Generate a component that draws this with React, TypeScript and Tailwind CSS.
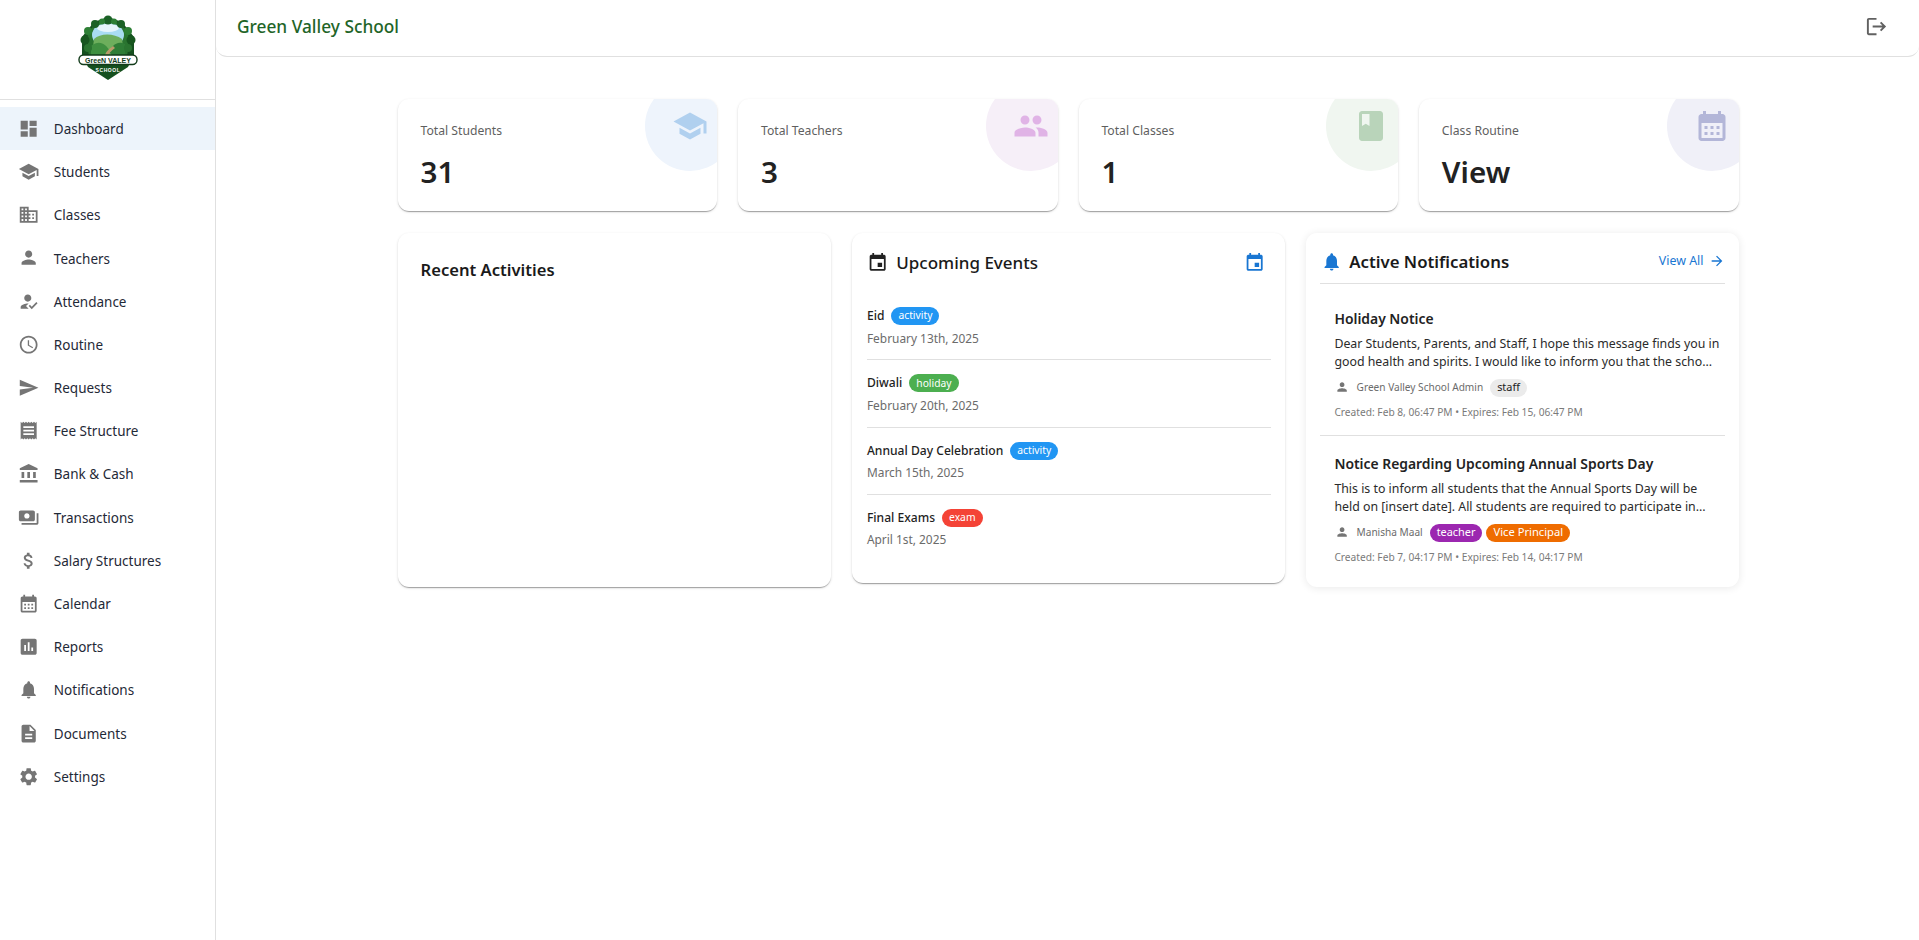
import React from "react";

const P: Record<string, string> = {
  dashboard: "M3 13h8V3H3zm0 8h8v-6H3zm10 0h8V11h-8zm0-18v6h8V3z",
  school: "M5 13.18v4L12 21l7-3.82v-4L12 17zM12 3 1 9l11 6 9-4.91V17h2V9z",
  domain: "M12 7V3H2v18h20V7H12zM6 19H4v-2h2v2zm0-4H4v-2h2v2zm0-4H4V9h2v2zm0-4H4V5h2v2zm4 12H8v-2h2v2zm0-4H8v-2h2v2zm0-4H8V9h2v2zm0-4H8V5h2v2zm10 12h-8v-2h2v-2h-2v-2h2v-2h-2V9h8v10zm-2-8h-2v2h2v-2zm0 4h-2v2h2v-2z",
  person: "M12 12c2.21 0 4-1.79 4-4s-1.79-4-4-4-4 1.79-4 4 1.79 4 4 4m0 2c-2.67 0-8 1.34-8 4v2h16v-2c0-2.66-5.33-4-8-4",
  reg: "M9 17l3-2.94c-.39-.04-.68-.06-1-.06-2.67 0-8 1.34-8 4v2h9l-3-3zm2-5c2.21 0 4-1.79 4-4s-1.79-4-4-4-4 1.79-4 4 1.79 4 4 4m4.47 8.5L12 17l1.4-1.41 2.07 2.08 5.13-5.17 1.4 1.41z",
  time: "M11.99 2C6.47 2 2 6.48 2 12s4.47 10 9.99 10C17.52 22 22 17.52 22 12S17.52 2 11.99 2zM12 20c-4.42 0-8-3.58-8-8s3.58-8 8-8 8 3.58 8 8-3.58 8-8 8zm.5-13H11v6l5.25 3.15.75-1.23-4.5-2.67z",
  send: "M2.01 21 23 12 2.01 3 2 10l15 2-15 2z",
  receipt: "M18 17H6v-2h12v2zm0-4H6v-2h12v2zm0-4H6V7h12v2zM3 22l1.5-1.5L6 22l1.5-1.5L9 22l1.5-1.5L12 22l1.5-1.5L15 22l1.5-1.5L18 22l1.5-1.5L21 22V2l-1.5 1.5L18 2l-1.5 1.5L15 2l-1.5 1.5L12 2l-1.5 1.5L9 2 7.5 3.5 6 2 4.5 3.5 3 2v20z",
  bank: "M4 10h3v7H4zm6.5 0h3v7h-3zM2 19h20v3H2zm15-9h3v7h-3zm-5-9L2 6v2h20V6z",
  payments: "M19 14V6c0-1.1-.9-2-2-2H3c-1.1 0-2 .9-2 2v8c0 1.1.9 2 2 2h14c1.1 0 2-.9 2-2zm-9-1c-1.66 0-3-1.34-3-3s1.34-3 3-3 3 1.34 3 3-1.34 3-3 3zm13-6v11c0 1.1-.9 2-2 2H4v-2h17V7h2z",
  money: "M11.8 10.9c-2.27-.59-3-1.2-3-2.15 0-1.09 1.01-1.85 2.7-1.85 1.78 0 2.44.85 2.5 2.1h2.21c-.07-1.72-1.12-3.3-3.21-3.81V3h-3v2.16c-1.94.42-3.5 1.68-3.5 3.61 0 2.31 1.91 3.46 4.7 4.13 2.5.6 3 1.48 3 2.41 0 .69-.49 1.79-2.7 1.79-2.06 0-2.87-.92-2.98-2.1h-2.2c.12 2.19 1.76 3.42 3.68 3.83V21h3v-2.15c1.95-.37 3.5-1.5 3.5-3.55 0-2.84-2.43-3.81-4.7-4.4z",
  calendar: "M19 4h-1V2h-2v2H8V2H6v2H5c-1.11 0-1.99.9-1.99 2L3 20c0 1.1.89 2 2 2h14c1.1 0 2-.9 2-2V6c0-1.1-.9-2-2-2zm0 16H5V10h14v10zM9 14H7v-2h2v2zm4 0h-2v-2h2v2zm4 0h-2v-2h2v2zm-8 4H7v-2h2v2zm4 0h-2v-2h2v2zm4 0h-2v-2h2v2z",
  assess: "M19 3H5c-1.1 0-2 .9-2 2v14c0 1.1.9 2 2 2h14c1.1 0 2-.9 2-2V5c0-1.1-.9-2-2-2zM9 17H7v-7h2v7zm4 0h-2V7h2v10zm4 0h-2v-4h2v4z",
  bell: "M12 22c1.1 0 2-.9 2-2h-4c0 1.1.89 2 2 2zm6-6v-5c0-3.07-1.64-5.64-4.5-6.32V4c0-.83-.67-1.5-1.5-1.5s-1.5.67-1.5 1.5v.68C7.63 5.36 6 7.92 6 11v5l-2 2v1h16v-1l-2-2z",
  doc: "M14 2H6c-1.1 0-1.99.9-1.99 2L4 20c0 1.1.89 2 2 2h12c1.1 0 2-.9 2-2V8l-6-6zm2 16H8v-2h8v2zm0-4H8v-2h8v2zm-3-5V3.5L18.5 9H13z",
  settings: "M19.14 12.94c.04-.3.06-.61.06-.94 0-.32-.02-.64-.07-.94l2.03-1.58c.18-.14.23-.41.12-.61l-1.92-3.32c-.12-.22-.37-.29-.59-.22l-2.39.96c-.5-.38-1.03-.7-1.62-.94l-.36-2.54c-.04-.24-.24-.41-.48-.41h-3.84c-.24 0-.43.17-.47.41l-.36 2.54c-.59.24-1.13.57-1.62.94l-2.39-.96c-.22-.08-.47 0-.59.22L2.74 8.87c-.12.21-.08.47.12.61l2.03 1.58c-.05.3-.09.63-.09.94s.02.64.07.94l-2.03 1.58c-.18.14-.23.41-.12.61l1.92 3.32c.12.22.37.29.59.22l2.39-.96c.5.38 1.03.7 1.62.94l.36 2.54c.05.24.24.41.48.41h3.84c.24 0 .44-.17.47-.41l.36-2.54c.59-.24 1.13-.56 1.62-.94l2.39.96c.22.08.47 0 .59-.22l1.92-3.32c.12-.22.07-.47-.12-.61l-2.01-1.58zM12 15.6c-1.98 0-3.6-1.62-3.6-3.6s1.62-3.6 3.6-3.6 3.6 1.62 3.6 3.6-1.62 3.6-3.6 3.6z",
  people: "M16 11c1.66 0 2.99-1.34 2.99-3S17.66 5 16 5s-3 1.34-3 3 1.34 3 3 3zm-8 0c1.66 0 2.99-1.34 2.99-3S9.66 5 8 5 5 6.34 5 8s1.34 3 3 3zm0 2c-2.33 0-7 1.17-7 3.5V19h14v-2.5c0-2.33-4.67-3.5-7-3.5zm8 0c-.29 0-.62.02-.97.05 1.16.84 1.97 1.97 1.97 3.45V19h6v-2.5c0-2.33-4.67-3.5-7-3.5z",
  book: "M18 2H6c-1.1 0-2 .9-2 2v16c0 1.1.9 2 2 2h12c1.1 0 2-.9 2-2V4c0-1.1-.9-2-2-2zM6 4h5v8l-2.5-1.5L6 12V4z",
  event: "M17 12h-5v5h5v-5zM16 1v2H8V1H6v2H5c-1.11 0-1.99.9-1.99 2L3 19c0 1.1.89 2 2 2h14c1.1 0 2-.9 2-2V5c0-1.1-.9-2-2-2h-1V1h-2zm3 18H5V8h14v11z",
  arrow: "M12 4l-1.41 1.41L16.17 11H4v2h12.17l-5.58 5.59L12 20l8-8z",
  logout: "M17 7l-1.41 1.41L18.17 11H8v2h10.17l-2.58 2.58L17 17l5-5zM4 5h8V3H4c-1.1 0-2 .9-2 2v14c0 1.1.9 2 2 2h8v-2H4V5z",
};

function Icon({ name, className }: { name: string; className: string }) {
  return (
    <svg viewBox="0 0 24 24" fill="currentColor" className={className}>
      <path d={P[name]} />
    </svg>
  );
}

function Logo() {
  return (
    <svg viewBox="0 0 60 66" className="w-[60px] h-[66px]">
      <path d="M30 2 L44 7 L56 22 L56 40 L50 52 L30 65 L10 52 L4 40 L4 22 L16 7 Z" fill="#15501f" />
      <path d="M9 26 C9 13 20 6 30 6 C40 6 51 13 51 26 L49 42 H11 Z" fill="#2a7430" />
      <ellipse cx="30" cy="20" rx="16" ry="12" fill="#a9dcf2" />
      <ellipse cx="30" cy="13" rx="11" ry="4" fill="#e6f5fb" />
      <path d="M16 24 C22 18 36 18 44 24 L46 40 H14 Z" fill="#6dae5c" />
      <path d="M13 31 C22 24 28 30 32 36 L27 42 H13 Z" fill="#3f8f40" />
      <path d="M47 29 C38 25 34 32 31 37 L36 42 H47 Z" fill="#2f7d36" />
      <path d="M35 31 C31 34 27 37 27 42 H30 C30 39 33 36 37 33 Z" fill="#b89a6a" />
      <circle cx="30" cy="5" r="4.5" fill="#1b6126" />
      <circle cx="24" cy="6.5" r="3" fill="#2d7f35" />
      <circle cx="36" cy="6.5" r="3" fill="#2d7f35" />
      <circle cx="17" cy="9" r="4" fill="#1b6126" />
      <circle cx="43" cy="9" r="4" fill="#1b6126" />
      <circle cx="10" cy="16" r="4" fill="#2d7f35" />
      <circle cx="50" cy="16" r="4" fill="#2d7f35" />
      <circle cx="7" cy="25" r="4.5" fill="#17561f" />
      <circle cx="53" cy="25" r="4.5" fill="#17561f" />
      <circle cx="10" cy="33" r="4" fill="#2a7430" />
      <circle cx="50" cy="33" r="4" fill="#2a7430" />
      <rect x="1" y="40" width="58" height="9.5" rx="4.5" fill="#ffffff" stroke="#123b1a" strokeWidth="1.4" />
      <text x="30" y="47.6" textAnchor="middle" fill="#123b1a" fontSize="7" fontWeight="800" fontFamily="'Liberation Sans', sans-serif">GreeN VALEY</text>
      <text x="30" y="56.6" textAnchor="middle" fill="#ffffff" fontSize="5" fontWeight="700" letterSpacing="0.6" fontFamily="'Liberation Sans', sans-serif">SCHOOL</text>
    </svg>
  );
}

const nav: [string, string][] = [
  ["dashboard", "Dashboard"],
  ["school", "Students"],
  ["domain", "Classes"],
  ["person", "Teachers"],
  ["reg", "Attendance"],
  ["time", "Routine"],
  ["send", "Requests"],
  ["receipt", "Fee Structure"],
  ["bank", "Bank & Cash"],
  ["payments", "Transactions"],
  ["money", "Salary Structures"],
  ["calendar", "Calendar"],
  ["assess", "Reports"],
  ["bell", "Notifications"],
  ["doc", "Documents"],
  ["settings", "Settings"],
];

const CARD_SHADOW = "shadow-[0_2px_1px_-1px_rgba(0,0,0,0.2),0_1px_1px_0_rgba(0,0,0,0.14),0_1px_3px_0_rgba(0,0,0,0.12)]";

function Stat({ label, value, icon, circle, tint }: { label: string; value: string; icon: string; circle: string; tint: string }) {
  return (
    <div className={`relative overflow-hidden h-[112px] rounded-[11px] bg-white pl-[22.5px] pt-[23px] ${CARD_SHADOW}`}>
      <div className={`absolute top-[-18px] right-[-18px] w-[90px] h-[90px] rounded-full ${circle}`} />
      <Icon name={icon} className={`absolute top-[8.5px] right-[9px] w-[36px] h-[36px] ${tint}`} />
      <div className="text-[12.2px] leading-[18px] text-[#5f5f5f]">{label}</div>
      <div className="mt-[11px] text-[29.6px] leading-[42px] font-semibold text-[#222]">{value}</div>
    </div>
  );
}

function Chip({ children, className }: { children: React.ReactNode; className: string }) {
  return (
    <span className={`inline-flex items-center h-[18px] px-[7px] rounded-full whitespace-nowrap ${className}`}>{children}</span>
  );
}

function EventRow({ title, chip, chipClass, date, last }: { title: string; chip: string; chipClass: string; date: string; last?: boolean }) {
  return (
    <div className={`h-[67.3px] pt-[14px] ${last ? "" : "border-b border-[#e0e0e0]"}`}>
      <div className="flex items-center h-[18px] gap-[7px]">
        <span className="text-[12.1px] font-medium text-[#1f1f1f]">{title}</span>
        <Chip className={`text-[10.3px] text-white ${chipClass}`}>{chip}</Chip>
      </div>
      <div className="mt-[3.5px] text-[11.9px] leading-[18px] text-[#6b6b6b]">{date}</div>
    </div>
  );
}

function Notice({ title, l1, l2, author, chips, meta, top, last }: { title: string; l1: string; l2: string; author: string; chips: React.ReactNode; meta: string; top: string; last?: boolean }) {
  return (
    <div className={`px-[14.5px] ${top} ${last ? "" : "h-[152px] border-b border-[#e0e0e0]"}`}>
      <div className="text-[13.9px] leading-[20px] font-semibold text-[#222]">{title}</div>
      <div className="mt-[6.5px] text-[12.35px] leading-[18px] text-[#2b2b2b] whitespace-nowrap">
        <div>{l1}</div>
        <div>{l2}</div>
      </div>
      <div className="mt-[7.5px] flex items-center h-[18px]">
        <span className="w-[14.2px] ml-[1px] mr-[7px]">
          <Icon name="person" className="w-[14.2px] h-[14.2px] text-[#757575]" />
        </span>
        <span className="text-[10.1px] text-[#6b6b6b] mr-[7px]">{author}</span>
        <div className="flex gap-[4px]">{chips}</div>
      </div>
      <div className="mt-[8.5px] text-[10.2px] leading-[15px] text-[#7a7a7a]">{meta}</div>
    </div>
  );
}

export default function App() {
  return (
    <div className="flex min-h-[940px] bg-white font-['Noto_Sans',sans-serif]">
      <aside className="w-[216px] shrink-0 border-r border-[#e0e0e0] bg-white">
        <div className="h-[100px] border-b border-[#e0e0e0] flex items-start justify-center pt-[15px]">
          <Logo />
        </div>
        <nav className="pt-[7px]">
          {nav.map(([icon, label], i) => (
            <div key={label} className={`flex items-center h-[43.2px] pl-[18px] ${i === 0 ? "bg-[#edf4fb]" : ""}`}>
              <Icon name={icon} className="w-[21.33px] h-[21.33px] text-[#757575] shrink-0" />
              <span className="ml-[14.5px] pt-[1px] text-[13.5px] text-[#1f2937]">{label}</span>
            </div>
          ))}
        </nav>
      </aside>
      <div className="flex-1 min-w-0">
        <header className="h-[57px] flex items-center justify-between pl-[21px] pr-[31px] border-b border-[#e0e0e0] rounded-b-[11px] bg-white">
          <div className="text-[17.3px] font-medium text-[#1f6528] mb-[2px]">Green Valley School</div>
          <Icon name="logout" className="w-[23px] h-[23px] text-[#616161] mb-[4px]" />
        </header>
        <main className="w-[1340.5px] ml-[182px] pt-[42px]">
          <div className="grid grid-cols-4 gap-[21.33px]">
            <Stat label="Total Students" value="31" icon="school" circle="bg-[#eef4fc]" tint="text-[#b0d0ef]" />
            <Stat label="Total Teachers" value="3" icon="people" circle="bg-[#f6eff8]" tint="text-[#e0b3e6]" />
            <Stat label="Total Classes" value="1" icon="book" circle="bg-[#f0f6f0]" tint="text-[#b9d4ba]" />
            <Stat label="Class Routine" value="View" icon="calendar" circle="bg-[#f0f0f8]" tint="text-[#b3b6d8]" />
          </div>
          <div className="grid grid-cols-3 gap-[21.33px] mt-[22px] items-start">
            <section className={`h-[354px] rounded-[11px] bg-white pl-[22.5px] pt-[24.5px] ${CARD_SHADOW}`}>
              <h2 className="text-[16.6px] leading-[24px] font-semibold text-[#1a1a1a]">Recent Activities</h2>
            </section>
            <section className={`h-[350px] rounded-[11px] bg-white px-[14px] pt-[18px] ${CARD_SHADOW}`}>
              <div className="flex items-center justify-between h-[24px] pl-[1px] pr-[5px]">
                <div className="flex items-center gap-[8px]">
                  <Icon name="event" className="w-[21.33px] h-[21.33px] text-[#212121]" />
                  <h2 className="text-[17px] font-medium text-[#1a1a1a]">Upcoming Events</h2>
                </div>
                <Icon name="event" className="w-[21.33px] h-[21.33px] text-[#1976d2]" />
              </div>
              <div className="mt-[18px] pl-[1px]">
                <EventRow title="Eid" chip="activity" chipClass="bg-[#2196f3]" date="February 13th, 2025" />
                <EventRow title="Diwali" chip="holiday" chipClass="bg-[#4caf50]" date="February 20th, 2025" />
                <EventRow title="Annual Day Celebration" chip="activity" chipClass="bg-[#2196f3]" date="March 15th, 2025" />
                <EventRow title="Final Exams" chip="exam" chipClass="bg-[#f44336]" date="April 1st, 2025" last />
              </div>
            </section>
            <section className="h-[354px] rounded-[11px] bg-white px-[14px] shadow-[0_1px_8px_rgba(0,0,0,0.09)]">
              <div className="flex items-start justify-between h-[50.5px] pt-[17px] border-b border-[#e0e0e0]">
                <div className="flex items-center gap-[7px] pl-[1px] h-[24px]">
                  <Icon name="bell" className="w-[21.33px] h-[21.33px] text-[#1976d2]" />
                  <h2 className="text-[16.8px] font-semibold text-[#1a1a1a]">Active Notifications</h2>
                </div>
                <div className="flex items-center gap-[5px] h-[22px] text-[12.4px] text-[#1976d2]">
                  View All
                  <Icon name="arrow" className="w-[16px] h-[16px]" />
                </div>
              </div>
              <Notice
                top="pt-[25px]"
                title="Holiday Notice"
                l1="Dear Students, Parents, and Staff, I hope this message finds you in"
                l2="good health and spirits. I would like to inform you that the scho..."
                author="Green Valley School Admin"
                chips={<Chip className="text-[10.9px] bg-[#ebebeb] text-[#222]">staff</Chip>}
                meta="Created: Feb 8, 06:47 PM • Expires: Feb 15, 06:47 PM"
              />
              <Notice
                top="pt-[18px]"
                title="Notice Regarding Upcoming Annual Sports Day"
                l1="This is to inform all students that the Annual Sports Day will be"
                l2="held on [insert date]. All students are required to participate in..."
                author="Manisha Maal"
                chips={
                  <>
                    <Chip className="text-[10.9px] bg-[#9c27b0] text-white">teacher</Chip>
                    <Chip className="text-[11.2px] bg-[#ef6c00] text-white">Vice Principal</Chip>
                  </>
                }
                meta="Created: Feb 7, 04:17 PM • Expires: Feb 14, 04:17 PM"
                last
              />
            </section>
          </div>
        </main>
      </div>
    </div>
  );
}
